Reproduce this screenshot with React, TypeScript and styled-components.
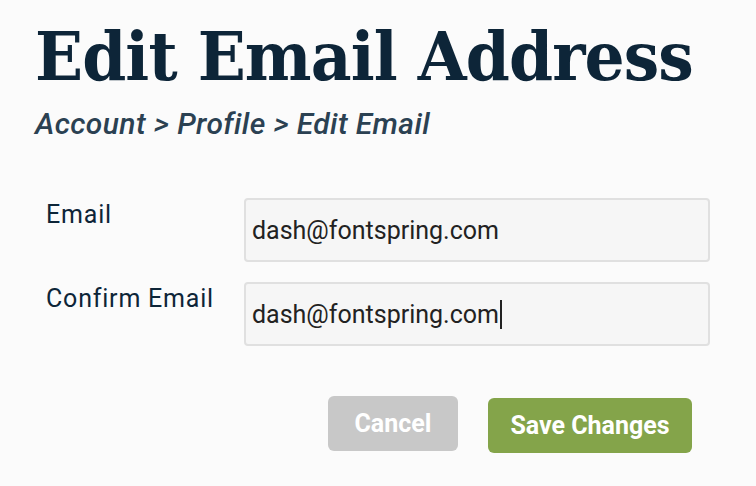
import React, { useState } from 'react';
import styled, { createGlobalStyle } from 'styled-components';

const GlobalStyle = createGlobalStyle`
  html, body {
    margin: 0;
    padding: 0;
    background: #fbfbfb;
  }
`;

function App() {
  const [email, setEmail] = useState('dash@fontspring.com');
  const [confirm, setConfirm] = useState('dash@fontspring.com');

  return (
    <>
      <GlobalStyle />
      <Page>
        <Title>Edit Email Address</Title>
        <Breadcrumb>Account &gt; Profile &gt; Edit Email</Breadcrumb>
        <Form>
          <Row>
            <Label>Email</Label>
            <Input value={email} onChange={(e) => setEmail(e.target.value)} />
          </Row>
          <Row>
            <Label>Confirm Email</Label>
            <InputWrap>
              <Input
                value={confirm}
                onChange={(e) => setConfirm(e.target.value)}
              />
              <Caret />
            </InputWrap>
          </Row>
          <Actions>
            <Button>Cancel</Button>
            <Button primary>Save Changes</Button>
          </Actions>
        </Form>
      </Page>
    </>
  );
}

const Page = styled.div`
  padding: 16px 0 0 35px;
  width: 756px;
  height: 486px;
  box-sizing: border-box;
  overflow: hidden;
`;

const Title = styled.h1`
  margin: 0;
  font-family: 'DejaVu Serif', serif;
  font-weight: bold;
  font-size: 68px;
  line-height: 80px;
  color: #0d2538;
  letter-spacing: -1px;
  white-space: nowrap;
  transform: scaleX(0.928);
  transform-origin: left center;
`;

const Breadcrumb = styled.div`
  margin-top: 10px;
  font-family: 'Roboto', sans-serif;
  font-style: italic;
  font-weight: 500;
  font-size: 30px;
  letter-spacing: 0.4px;
  color: #2b4152;
`;

const Form = styled.div`
  margin-top: 57px;
  display: flex;
  flex-direction: column;
  gap: 20px;
  padding-left: 11px;
`;

const Row = styled.div`
  display: flex;
  align-items: flex-start;
`;

const Label = styled.div`
  width: 198px;
  padding-top: 2px;
  font-family: 'Roboto', sans-serif;
  font-size: 25px;
  letter-spacing: 0.8px;
  color: #0d2538;
`;

const InputWrap = styled.div`
  position: relative;
`;

const Input = styled.input`
  width: 466px;
  height: 64px;
  box-sizing: border-box;
  border: 2px solid #e0e0e0;
  border-radius: 4px;
  background: #f6f6f6;
  padding: 0 6px;
  font-family: 'Roboto', sans-serif;
  font-size: 25px;
  color: #222;
  outline: none;
`;

const Caret = styled.span`
  position: absolute;
  left: 256px;
  top: 18px;
  width: 2px;
  height: 29px;
  background: #222;
`;

const Actions = styled.div`
  display: flex;
  gap: 30px;
  margin-top: 30px;
  padding-left: 282px;
`;

const Button = styled.button<{ primary?: boolean }>`
  height: 55px;
  padding: 0 ${(p) => (p.primary ? '22.5px' : '26.5px')};
  border: none;
  border-radius: 6px;
  background: ${(p) => (p.primary ? '#84a44a' : '#c8c8c8')};
  color: #fff;
  font-family: 'Roboto', sans-serif;
  font-weight: bold;
  font-size: 25px;
  margin-top: ${(p) => (p.primary ? '2px' : '0')};
  cursor: pointer;
`;

export default App;
